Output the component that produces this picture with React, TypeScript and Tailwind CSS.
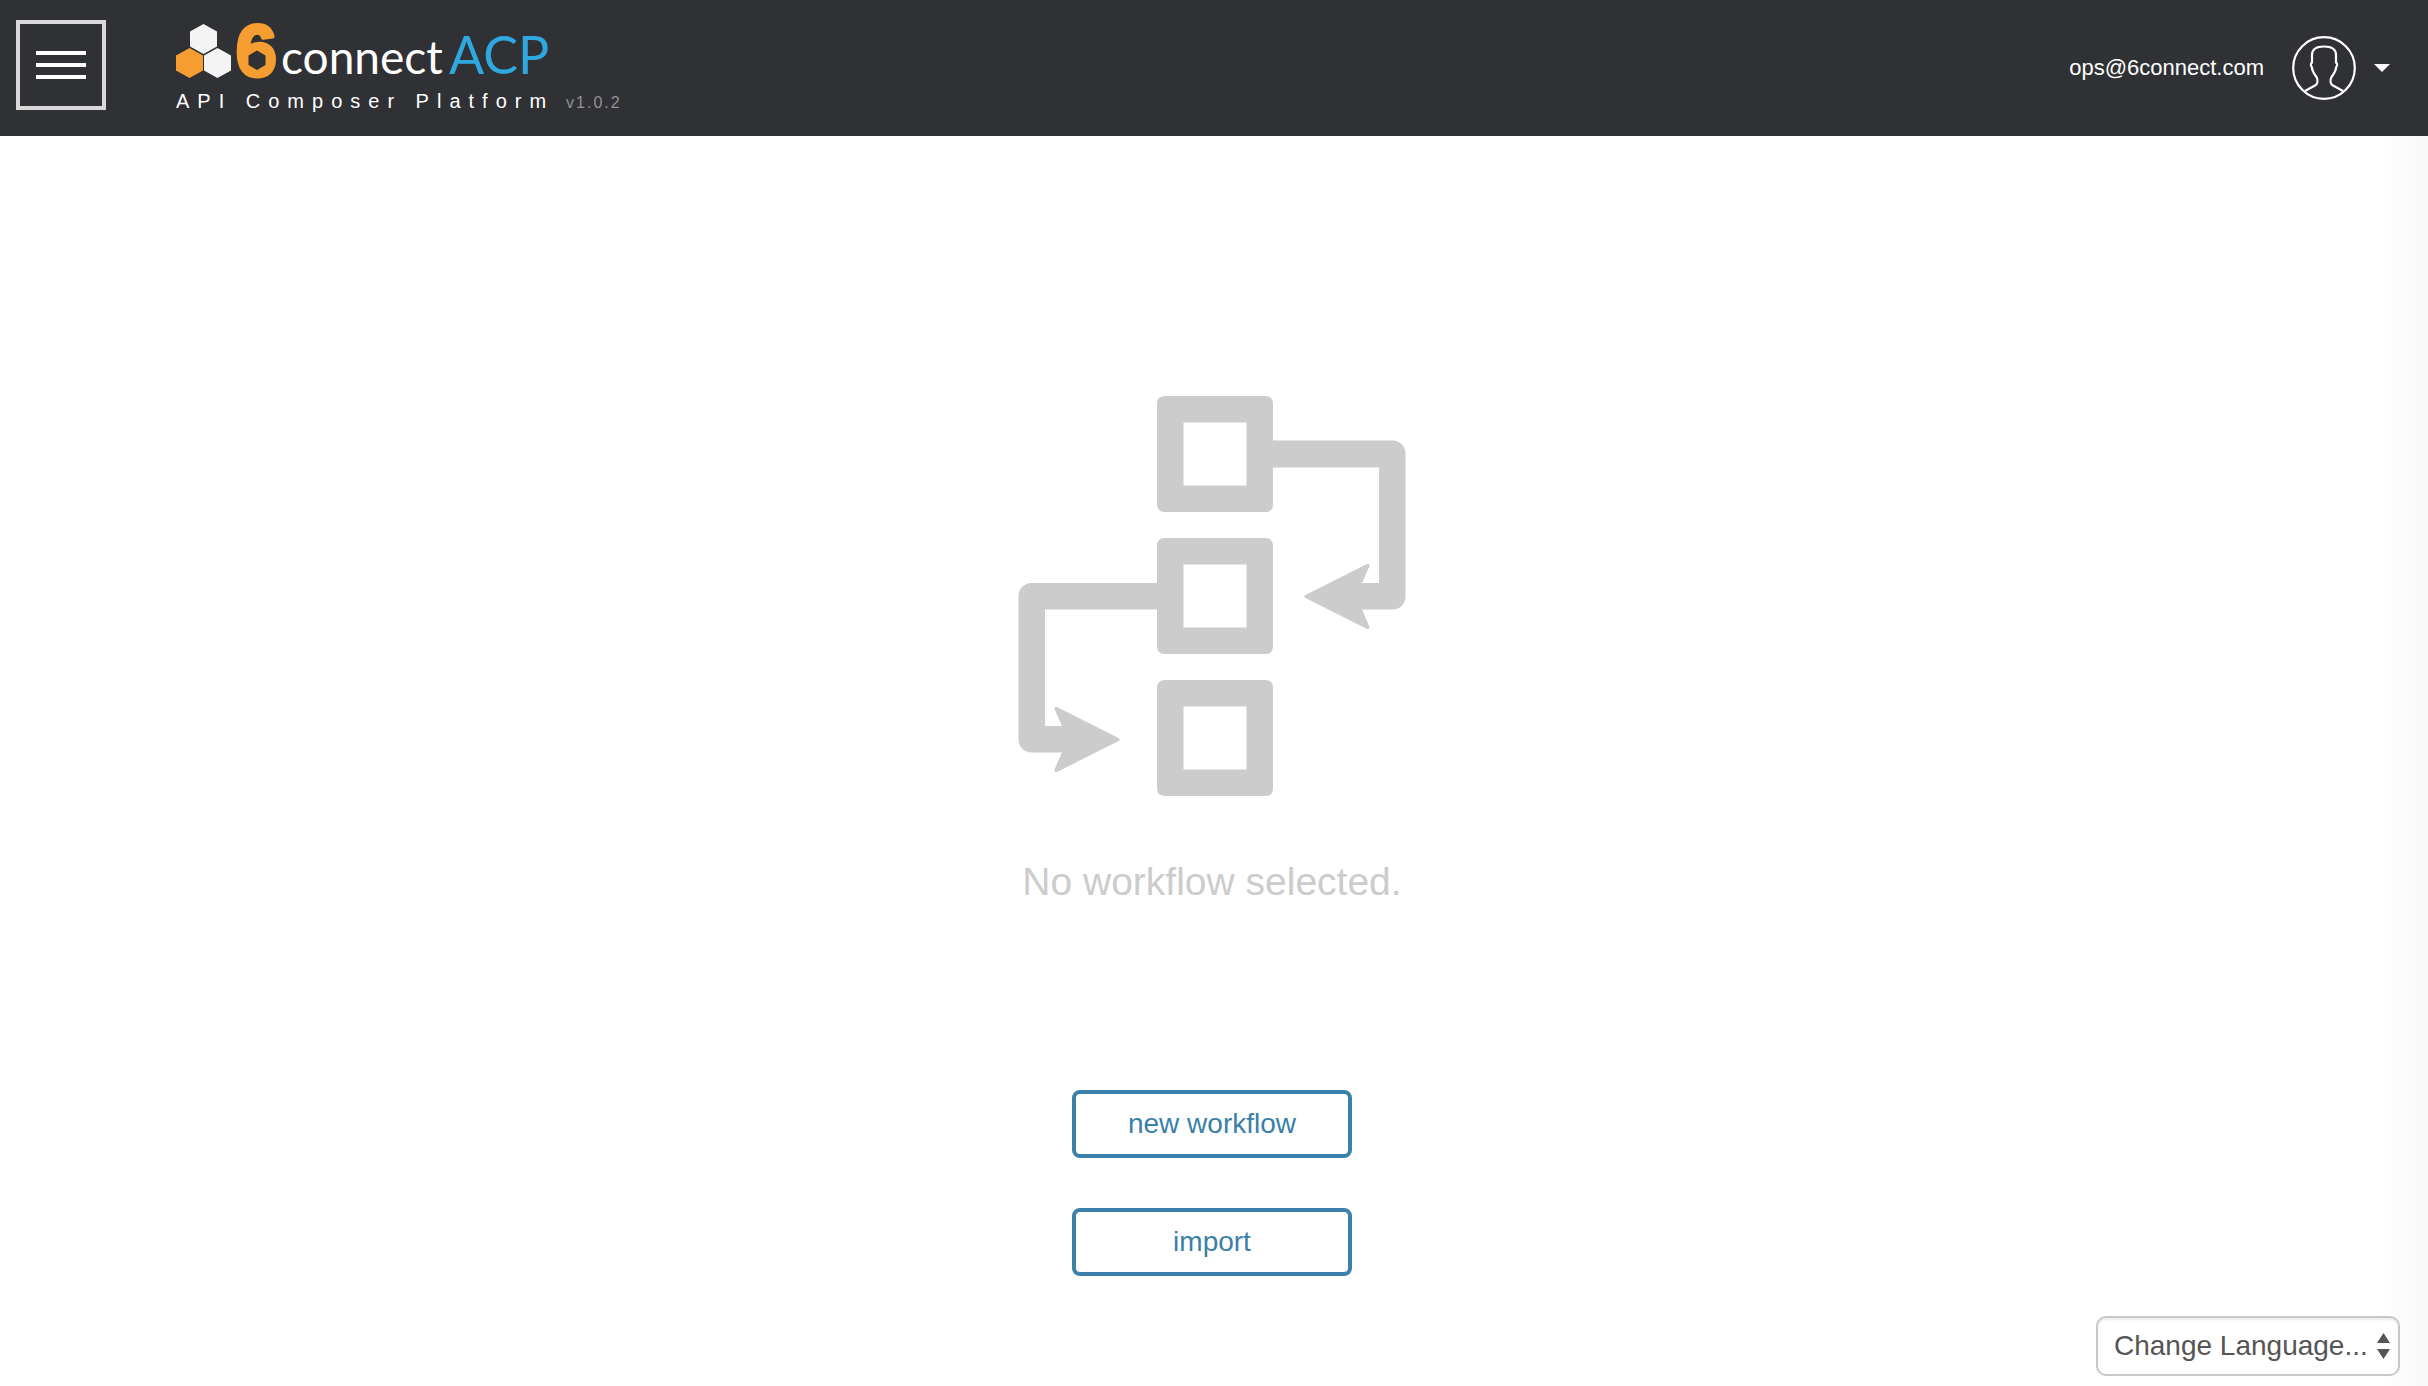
import React, { useState } from 'react';

const languages = ['English', 'Français', 'Deutsch', 'Español', '日本語'];

function Logo() {
  return (
    <svg className="overflow-visible" width="376" height="65" viewBox="0 0 376 65" role="img" aria-label="6connect ACP">
      <g fill="#f4f4f4">
        <path d="M27.500 0L41 7.500V22.500L27.500 30L14 22.500V7.500Z" />
        <path d="M41.500 24L55 31.500V46.500L41.500 54L28 46.500V31.500Z" />
      </g>
      <path fill="#f59d31" d="M13.500 24L27 31.500V46.500L13.500 54L0 46.500V31.500Z" />
      <text x="60" y="52" fill="#f59d31" stroke="#f59d31" strokeWidth="4" strokeLinejoin="round" fontSize="73" fontWeight="700" fontFamily="Liberation Sans, Arial, sans-serif">6</text>
      <path fill="#f59d31" d="M70 25H92V48H70Z" />
      <path fill="#303135" d="M81 26.500L89.500 31.500V41L81 46L72.500 41V31.500Z" />
      <text x="105" y="50" fill="#ffffff" fontSize="46" fontFamily="Lato, sans-serif">connect</text>
      <text x="273" y="50" fill="#2fa8e0" fontSize="52" fontFamily="Lato, sans-serif">ACP</text>
    </svg>
  );
}

function AvatarIcon() {
  return (
    <svg width="64" height="64" viewBox="0 0 64 64" fill="none" stroke="#ffffff" strokeWidth="2.2" aria-hidden="true">
      <circle cx="32" cy="32" r="30.800" />
      <path d="M13 55L23 49.500C26 48 26 44 24.500 41C21.500 37 20 35 20 31.500C18.500 30 18.500 27.500 20 26.500V19C20 13 25 10.500 32 10.500S44 13 44 19V26.500C45.500 27.500 45.500 30 44 31.500C44 35 42.500 37 39.500 41C38 44 38 48 41 49.500L51 55" />
    </svg>
  );
}

function WorkflowIcon() {
  return (
    <svg width="388" height="400" viewBox="0 0 388 400" fill="#cccccc" aria-hidden="true">
      <g fillRule="evenodd">
        <path d="M147 0H247Q255 0 255 8V108Q255 116 247 116H147Q139 116 139 108V8Q139 0 147 0ZM165.500 26.500V89.500H228.500V26.500Z" />
        <path d="M147 142H247Q255 142 255 150V250Q255 258 247 258H147Q139 258 139 250V150Q139 142 147 142ZM165.500 168.500V231.500H228.500V168.500Z" />
        <path d="M147 284H247Q255 284 255 292V392Q255 400 247 400H147Q139 400 139 392V292Q139 284 147 284ZM165.500 310.500V373.500H228.500V310.500Z" />
      </g>
      <path d="M255 44.500H374.500A13 13 0 0 1 387.500 57.500V200.500A13 13 0 0 1 374.500 213.500H344L351.500 231Q352 233.500 349 233L287.500 202Q285 200.500 287.500 199L349 168Q352 167.500 351.500 170L344 187H361V71.500H255Z" />
      <path d="M139 187H13.500A13 13 0 0 0 .5 200V343.500A13 13 0 0 0 13.500 356.500H44L36.500 373.500Q36 376 39 376L100.500 345Q103 343.500 100.500 342L39 311Q36 310.500 36.500 313L44 330H27V213.500H139Z" />
    </svg>
  );
}

export default function App() {
  const [language, setLanguage] = useState('');

  return (
    <div className="relative min-h-screen flex flex-col bg-white font-['Liberation_Sans',Arial,sans-serif]">
      <header className="h-[136px] pl-4 pr-[38px] flex justify-between bg-[#303135]">
        <div className="pt-5 flex items-start">
          <button aria-label="Menu" className="w-[90px] h-[90px] border-4 border-[#d8d8d8] flex flex-col items-center justify-center gap-2">
            <span className="w-[50px] h-1 bg-white" />
            <span className="w-[50px] h-1 bg-white" />
            <span className="w-[50px] h-1 bg-white" />
          </button>
          <div className="ml-[70px] mt-1">
            <Logo />
            <div className="flex items-baseline gap-3 whitespace-nowrap">
              <span className="text-xl leading-6 tracking-[8px] text-white">API Composer Platform</span>
              <span className="text-base leading-6 tracking-[2px] text-[#929292]">v1.0.2</span>
            </div>
          </div>
        </div>

        <button className="flex items-center text-white">
          <span className="text-[22px] leading-7">ops@6connect.com</span>
          <span className="ml-7"><AvatarIcon /></span>
          <svg className="ml-[18px]" width="16" height="8" viewBox="0 0 16 8" fill="#ffffff" aria-hidden="true"><path d="M0 0H16L8 8Z" /></svg>
        </button>
      </header>

      <main className="flex-1 pt-[260px] pb-20 pr-1 flex flex-col items-center">
        <WorkflowIcon />
        <h1 className="mt-[62px] text-[39px] leading-[48px] text-[#cccccc]">No workflow selected.</h1>
        <div className="mt-[184px] flex flex-col gap-[50px]">
          <button className="w-[280px] h-[68px] border-4 border-[#3a80a8] rounded-lg text-[28px] leading-8 text-[#3a80a8]">new workflow</button>
          <button className="w-[280px] h-[68px] border-4 border-[#3a80a8] rounded-lg text-[28px] leading-8 text-[#3a80a8]">import</button>
        </div>
      </main>

      <div className="absolute right-0 top-[136px] bottom-0 w-12 bg-linear-to-r from-white to-[#f8f8f8]" />

      <div className="absolute right-7 bottom-2.5">
        <select
          aria-label="Change Language"
          value={language}
          onChange={e => setLanguage(e.target.value)}
          className="appearance-none w-[304px] h-[60px] pl-4 pr-8 border-2 border-[#c8c8c8] rounded-[10px] bg-white text-[28px] leading-8 text-[#555555] shadow-[inset_0_2px_2px_rgba(0,0,0,0.08)]"
        >
          <option value="">Change Language...</option>
          {languages.map(l => <option key={l} value={l}>{l}</option>)}
        </select>
        <svg className="absolute right-2.5 top-4 pointer-events-none" width="13" height="28" viewBox="0 0 13 28" fill="#555555" aria-hidden="true">
          <path d="M0 11L6.500 1L13 11ZM0 17L6.500 27L13 17Z" />
        </svg>
      </div>
    </div>
  );
}
